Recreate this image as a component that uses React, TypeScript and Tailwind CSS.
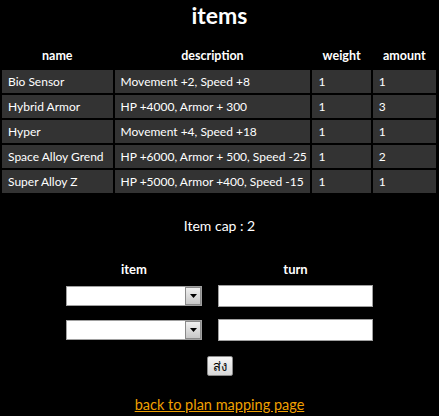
const items = [
  { name: "Bio Sensor", description: "Movement +2, Speed +8", weight: 1, amount: 1 },
  { name: "Hybrid Armor", description: "HP +4000, Armor + 300", weight: 1, amount: 3 },
  { name: "Hyper", description: "Movement +4, Speed +18", weight: 1, amount: 1 },
  { name: "Space Alloy Grend", description: "HP +6000, Armor + 500, Speed -25", weight: 1, amount: 2 },
  { name: "Super Alloy Z", description: "HP +5000, Armor +400, Speed -15", weight: 1, amount: 1 },
];

const SelectBox = () => (
  <div className="relative h-[20px] w-[136px] border border-[#a0a0a0] bg-white">
    <select className="h-full w-full appearance-none bg-transparent outline-none"></select>
    <div className="pointer-events-none absolute right-0 top-0 flex h-[18px] w-[16px] items-center justify-center border border-[#8a8a8a] bg-gradient-to-b from-[#f0f0f0] to-[#c8c8c8]">
      <svg width="7" height="4" viewBox="0 0 7 4">
        <path d="M0 0 L7 0 L3.5 4 Z" fill="#000" />
      </svg>
    </div>
  </div>
);

const TurnInput = () => (
  <input
    type="text"
    className="h-[22px] w-[155px] border border-[#a0a0a0] bg-white px-1 text-[13px] text-black outline-none"
  />
);

export default function App() {
  return (
    <div
      className="h-[416px] w-full overflow-hidden bg-black text-white"
      style={{ fontFamily: "Lato, 'Open Sans', 'Noto Sans', 'DejaVu Sans', sans-serif" }}
    >
      <h1 className="pt-[1px] text-center text-[23px] font-bold leading-[28px]">items</h1>

      <table className="mt-[14px] w-[438px] table-fixed border-separate border-spacing-[2px] text-[12px]">
        <colgroup>
          <col className="w-[110px]" />
          <col className="w-[195px]" />
          <col className="w-[58px]" />
          <col className="w-[63px]" />
        </colgroup>
        <thead>
          <tr className="h-[23px]">
            <th className="text-[12.5px] font-bold">name</th>
            <th className="text-[12.5px] font-bold">description</th>
            <th className="text-[12.5px] font-bold">weight</th>
            <th className="text-[12.5px] font-bold">amount</th>
          </tr>
        </thead>
        <tbody>
          {items.map((item) => (
            <tr key={item.name} className="h-[23px]">
              <td className="bg-[#333333] px-[6px] whitespace-nowrap">{item.name}</td>
              <td className="bg-[#333333] px-[6px] whitespace-nowrap">{item.description}</td>
              <td className="bg-[#333333] px-[6px]">{item.weight}</td>
              <td className="bg-[#333333] px-[6px]">{item.amount}</td>
            </tr>
          ))}
        </tbody>
      </table>

      <p className="mt-[22px] text-center text-[14px] leading-[18px]">Item cap : 2</p>

      <form className="mt-[26px] flex flex-col items-center">
        <div className="grid grid-cols-[136px_155px] items-center gap-x-[16px] text-[13px]">
          <div className="text-center font-bold leading-[16px]">item</div>
          <div className="text-center font-bold leading-[16px]">turn</div>
          <div className="mt-[8px]">
            <SelectBox />
          </div>
          <div className="mt-[8px]">
            <TurnInput />
          </div>
          <div className="mt-[12px]">
            <SelectBox />
          </div>
          <div className="mt-[12px]">
            <TurnInput />
          </div>
        </div>
        <button
          type="button"
          className="mt-[15px] h-[20px] w-[26px] rounded-[2px] border border-[#8a8a8a] bg-gradient-to-b from-[#f6f6f6] to-[#d8d8d8] text-[13px] leading-[16px] text-black"
        >
          ส่ง
        </button>
      </form>

      <div className="mt-[20px] text-center text-[14.5px] leading-[18px]">
        <a href="#" className="text-[#f0a000] underline">
          back to plan mapping page
        </a>
      </div>
    </div>
  );
}
